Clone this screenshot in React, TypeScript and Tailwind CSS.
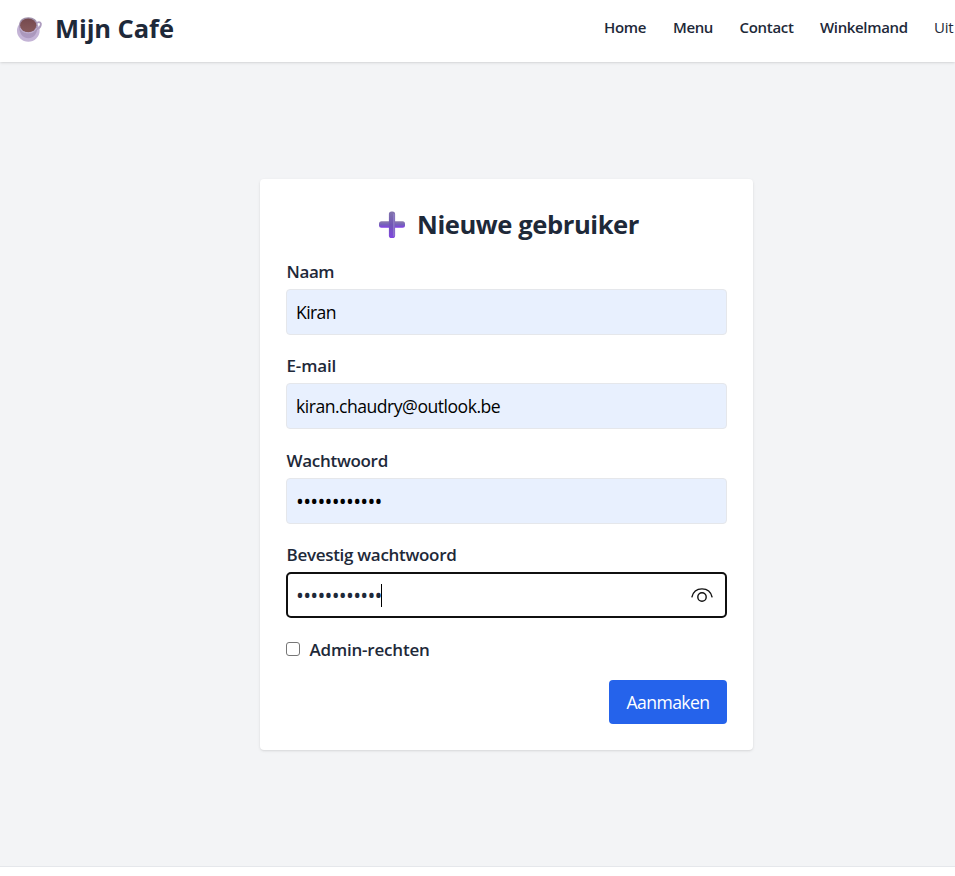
import type { ReactNode } from "react";

function CoffeeIcon() {
  return (
    <svg className="h-[30px] w-[28px] shrink-0" viewBox="0 0 28 30" aria-hidden="true">
      <defs>
        <linearGradient id="cup" x1="0" y1="0" x2="0" y2="1">
          <stop offset="0" stopColor="#9f90a8" />
          <stop offset="1" stopColor="#ae9ac2" />
        </linearGradient>
        <linearGradient id="brew" x1="0" y1="0" x2="0" y2="1">
          <stop offset="0" stopColor="#75494e" />
          <stop offset="1" stopColor="#875a5c" />
        </linearGradient>
      </defs>
      <ellipse cx="13.300" cy="16.800" rx="11.300" ry="11" fill="#c4b4d6" />
      <path d="M21.800 8.800c3-1.600 4.500-.1 4 2.100-.5 2.300-2 3.900-4.500 4.500" fill="none" stroke="#ae9dbf" strokeWidth="1.900" />
      <path d="M4 11.500C4 6 8 3.200 13.300 3.200S22.600 6 22.600 11.500c0 7.300-3.300 12.800-9.300 12.800S4 18.800 4 11.500z" fill="url(#cup)" />
      <ellipse cx="13.200" cy="11.300" rx="8.100" ry="6.900" fill="url(#brew)" />
      <path d="M5 14c1.300 3.400 4.600 4.900 8.300 4.900s7-1.500 8.300-4.900" fill="none" stroke="#c3b2d2" strokeWidth="1" />
    </svg>
  );
}

function PlusIcon() {
  return (
    <svg className="h-[28px] w-[28px] shrink-0" viewBox="0 0 28 28" aria-hidden="true">
      <defs>
        <linearGradient id="bar-h" x1="0" y1="0" x2="0" y2="1">
          <stop offset="0" stopColor="#8b7cad" />
          <stop offset=".5" stopColor="#7663b9" />
          <stop offset="1" stopColor="#8240e5" />
        </linearGradient>
        <linearGradient id="bar-v" x1="0" y1="0" x2="0" y2="1">
          <stop offset="0" stopColor="#8274ad" />
          <stop offset=".5" stopColor="#7056b5" />
          <stop offset="1" stopColor="#8046e0" />
        </linearGradient>
      </defs>
      <rect x="1" y="10.300" width="26" height="6.400" rx="2.500" fill="url(#bar-h)" />
      <rect x="10.900" y="0.500" width="6.200" height="26.600" rx="2.600" fill="url(#bar-v)" />
      <path d="M15.900 2.500v23" stroke="#9684ca" strokeWidth="1.200" />
    </svg>
  );
}

function RevealIcon() {
  return (
    <svg className="h-[16px] w-[24px]" viewBox="0 0 24 16" fill="none" stroke="#111" strokeWidth="1.400" aria-hidden="true">
      <path d="M1.800 10.300C3 5 7 1.900 12 1.900s9 3.100 10.200 8.400" />
      <circle cx="12" cy="10" r="4.200" />
    </svg>
  );
}

function Field({ label, labelClass, children }: { label: string; labelClass: string; children: ReactNode }) {
  return (
    <div className="mb-[17.800px] flex flex-col">
      <span className={`mb-[4.500px] h-[26.200px] whitespace-nowrap pl-[0.500px] text-[17px] leading-[27px] font-semibold ${labelClass}`}>{label}</span>
      {children}
    </div>
  );
}

const filled = "flex h-[46px] items-center rounded-[4px] border border-gray-200 bg-[#e8f0fe] px-[9px] pt-px text-[17.600px] whitespace-nowrap text-black";

export default function App() {
  return (
    <div className="h-[876px] w-full overflow-hidden bg-white font-['Open_Sans','Noto_Sans',sans-serif] text-gray-800">
      <header className="relative flex h-[62px] justify-between bg-white pl-[15px] shadow">
        <div className="flex h-[57px] items-center gap-[12px]">
          <CoffeeIcon />
          <span className="pb-[2px] text-[25.500px] leading-[36px] font-bold tracking-[-0.080px] whitespace-nowrap">Mijn Café</span>
        </div>
        <nav className="flex h-[55px] w-[352px] shrink-0 items-center text-[15px] font-semibold whitespace-nowrap">
          <a className="w-[69px] shrink-0 pl-px tracking-[-0.300px]">Home</a>
          <a className="w-[67px] shrink-0 pl-px tracking-[-0.400px]">Menu</a>
          <a className="w-[81px] shrink-0 pl-[0.500px] tracking-[-0.300px]">Contact</a>
          <a className="w-[114px] shrink-0 tracking-[-0.350px]">Winkelmand</a>
          <a className="shrink-0 font-normal tracking-[-0.200px]">Uit</a>
        </nav>
      </header>
      <main className="flex h-[805px] border-b border-gray-200 bg-gray-100 pt-[117px] pl-[260px]">
        <form className="h-[571px] w-[493px] rounded-[4px] bg-white px-[26px] pt-[27px] shadow">
          <h1 className="mb-[14px] ml-[92px] flex h-[38px] items-center gap-[11px] text-[25.600px] font-bold whitespace-nowrap">
            <PlusIcon />
            <span className="pt-px tracking-[-0.430px]">Nieuwe gebruiker</span>
          </h1>
          <Field label="Naam" labelClass="tracking-[-0.400px]">
            <div className={filled}>
              <span className="tracking-[-0.600px]">Kiran</span>
            </div>
          </Field>
          <Field label="E-mail" labelClass="tracking-[-0.150px]">
            <div className={filled}>
              <span className="tracking-[-0.500px]">kiran.chaudry@outlook.be</span>
            </div>
          </Field>
          <Field label="Wachtwoord" labelClass="tracking-[-0.300px]">
            <div className={filled}>
              <span className="pt-[2px] text-[21px] tracking-[-0.750px]">••••••••••••</span>
            </div>
          </Field>
          <Field label="Bevestig wachtwoord" labelClass="tracking-[-0.300px]">
            <div className="flex h-[46px] items-center rounded-[5px] border-2 border-[#101010] bg-white pr-[11px] pl-[8px] text-[17.600px] whitespace-nowrap">
              <span className="mr-[-1px] pt-[2px] text-[21px] tracking-[-0.750px]">••••••••••••</span>
              <span className="h-[23px] w-px bg-black" />
              <span className="ml-auto">
                <RevealIcon />
              </span>
            </div>
          </Field>
          <label className="flex h-[26px] items-center gap-[9.500px] text-[17px] font-semibold whitespace-nowrap">
            <span className="h-[14px] w-[14px] rounded-[3px] border border-[#767676] bg-white" />
            <span className="pt-[2px] tracking-[-0.200px]">Admin-rechten</span>
          </label>
          <div className="mt-[18px] flex justify-end">
            <button type="button" className="h-[44px] w-[118px] rounded-[4px] bg-[#2563eb] pt-px text-[17.600px] tracking-[-0.600px] text-white">Aanmaken</button>
          </div>
        </form>
      </main>
    </div>
  );
}
